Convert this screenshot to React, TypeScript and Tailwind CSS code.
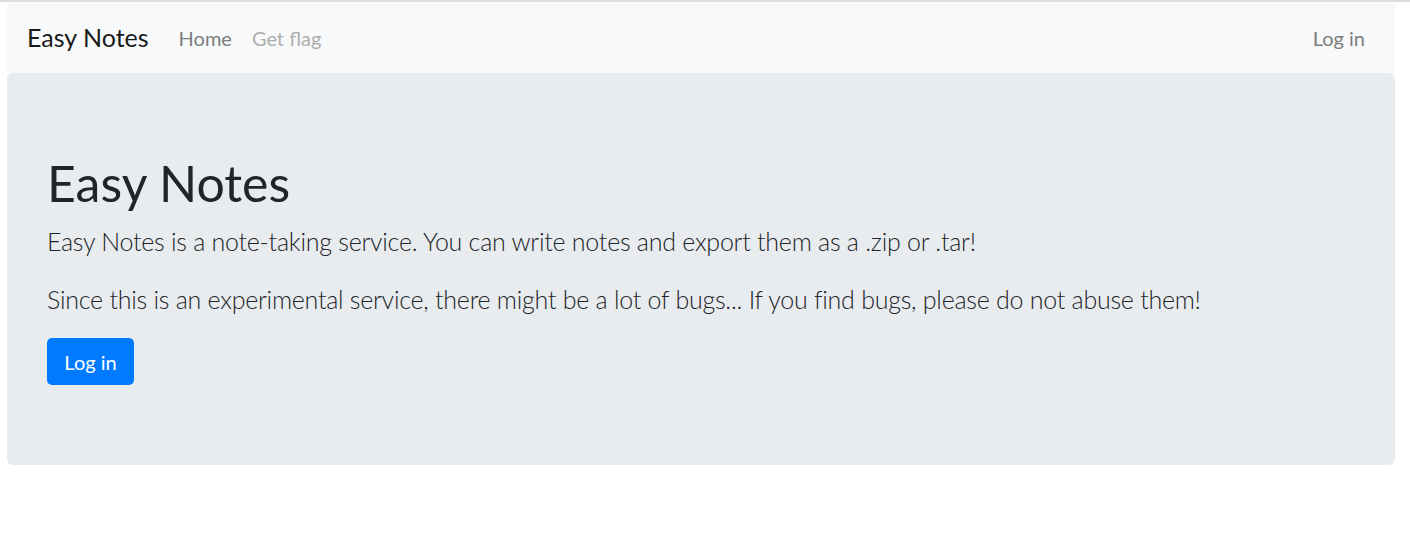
import React from 'react';

const NavLink: React.FC<{ label: string; disabled?: boolean }> = ({ label, disabled }) => (
  <a
    href="#"
    className={`block px-[10px] py-[10px] text-[20px] leading-[30px] ${disabled ? 'text-[#adaeae]' : 'text-[#7c7d7d]'}`}
  >
    {label}
  </a>
);

const App: React.FC = () => {
  return (
    <div className="min-h-screen bg-white border-t-2 border-[#dcdde1] font-['Lato',sans-serif]">
      <div className="ml-[7px] w-[1388px] pt-px">
        <nav className="flex items-center h-[70px] px-[20px] bg-[#f8f9fa]">
          <a href="#" className="mr-[20px] py-[6px] text-[25px] leading-[37.5px] text-[#1a1a1a]">
            Easy Notes
          </a>
          <NavLink label="Home" />
          <NavLink label="Get flag" disabled />
          <div className="ml-auto">
            <NavLink label="Log in" />
          </div>
        </nav>

        <div className="bg-[#e9ecef] rounded-[6px] pt-[80px] pb-[80px] px-[40px] text-[#212529]">
          <h1 className="mb-[10px] text-[50px] leading-[60px] font-normal">Easy Notes</h1>
          <p className="mb-[20px] text-[25px] leading-[37.5px] font-light tracking-[-0.25px]">
            Easy Notes is a note-taking service. You can write notes and export them as a .zip or .tar!
          </p>
          <p className="mb-[20px] text-[25px] leading-[37.5px] font-light tracking-[-0.25px]">
            Since this is an experimental service, there might be a lot of bugs... If you find bugs, please do not abuse them!
          </p>
          <button className="w-[87px] h-[47px] rounded-[5px] bg-[#007bff] text-white text-[20px] leading-[30px]">
            Log in
          </button>
        </div>
      </div>
    </div>
  );
};

export default App;
